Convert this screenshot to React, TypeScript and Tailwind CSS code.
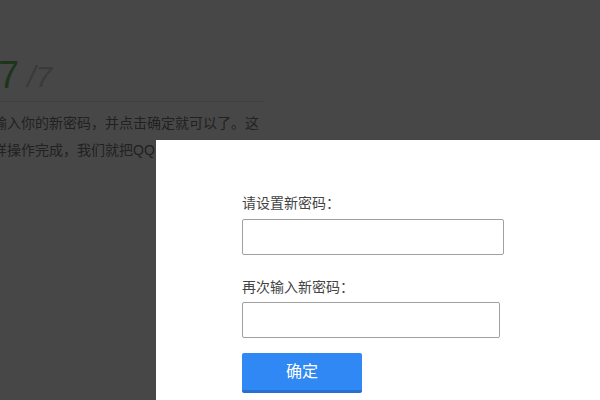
import React from "react";

export default function App() {
  return (
    <div
      className="relative w-[600px] h-[400px] overflow-hidden bg-white"
      style={{ fontFamily: '"Liberation Sans", "Noto Sans CJK SC", sans-serif' }}
    >
      {/* underlying page */}
      <div className="-ml-[7px] pt-[54px] w-[290px]">
        <div className="flex items-end gap-[8px] h-[42px] pl-[5px]">
          <span className="text-[38px] leading-[42px] text-[#6cbf6a]">7</span>
          <span className="text-[30px] leading-[38px] italic font-light text-[#d0d0d0]">/7</span>
        </div>
        <div className="mt-[5px] h-px w-[272px] bg-[#e6e6e6]" />
        <div className="mt-[8px] text-[14px] leading-[27px] text-[#777]">
          <p>输入你的新密码，并点击确定就可以了。这</p>
          <p>样操作完成，我们就把QQ</p>
        </div>
      </div>

      {/* overlay */}
      <div className="absolute inset-0 bg-[rgba(0,0,0,0.72)]" />

      {/* dialog panel */}
      <div className="absolute left-[156px] top-[140px] right-0 bottom-0 bg-white pl-[86px] pt-[53px]">
        <div className="flex flex-col">
          <label className="text-[14px] leading-[20px] text-[#444]">请设置新密码：</label>
          <input
            type="password"
            className="mt-[6px] w-[262px] h-[36px] border border-[#a0a0a0] rounded-[2px] outline-none"
          />
          <label className="mt-[22px] text-[14px] leading-[20px] text-[#444]">再次输入新密码：</label>
          <input
            type="password"
            className="mt-[5px] w-[258px] h-[36px] border border-[#a0a0a0] rounded-[2px] outline-none"
          />
          <button className="mt-[15px] w-[120px] h-[40px] rounded-[2px] bg-[#3088f5] border-b-[3px] border-[#2670d2] text-white text-[16px] leading-[37px]">
            确定
          </button>
        </div>
      </div>
    </div>
  );
}
